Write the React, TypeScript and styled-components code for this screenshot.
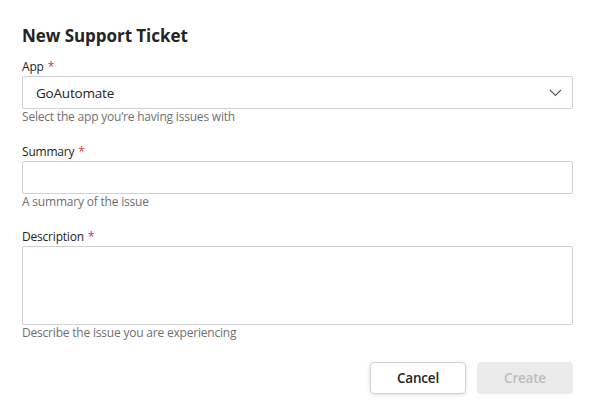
import React from 'react';
import styled, { createGlobalStyle } from 'styled-components';

const Global = createGlobalStyle`
  html, body {
    margin: 0;
    background: #ffffff;
  }
  body {
    font-family: "Open Sans", "Noto Sans", "Liberation Sans", sans-serif;
    color: #242424;
  }
`;

const Dialog = styled.form`
  width: 595px;
  height: 416px;
  box-sizing: border-box;
  padding: 22px 22px 0 22px;
  display: flex;
  flex-direction: column;
`;

const Title = styled.h1`
  margin: 0 0 9px 0;
  font-size: 17px;
  line-height: 28px;
  font-weight: 700;
  color: #242424;
  letter-spacing: -0.05px;
`;

const Field = styled.div`
  display: flex;
  flex-direction: column;
  margin-bottom: 19px;
`;

const Label = styled.label`
  font-size: 12px;
  line-height: 16px;
  color: #242424;
  margin-bottom: 1px;
  letter-spacing: -0.2px;
`;

const Star = styled.span`
  color: #d13438;
  margin-left: 4px;
`;

const Box = styled.div<{ $tall?: boolean }>`
  height: ${(p) => (p.$tall ? '79px' : '33px')};
  border: 1px solid #d1d1d1;
  border-radius: 2px;
  box-sizing: border-box;
  display: flex;
  align-items: center;
  justify-content: space-between;
  padding: 0 10px 0 13px;
  font-size: 13.5px;
  color: #242424;
  letter-spacing: -0.2px;
`;

const Hint = styled.div`
  font-size: 12px;
  line-height: 16px;
  color: #707070;
  letter-spacing: -0.2px;
`;

const Actions = styled.div`
  display: flex;
  justify-content: flex-end;
  gap: 11px;
  margin-top: 2px;
`;

const Button = styled.button<{ $disabled?: boolean }>`
  width: 96px;
  height: 32px;
  border-radius: 4px;
  font-family: inherit;
  font-size: 13.5px;
  font-weight: 600;
  letter-spacing: -0.2px;
  border: 1px solid ${(p) => (p.$disabled ? '#ebebeb' : '#d1d1d1')};
  background: ${(p) => (p.$disabled ? '#ebebeb' : '#ffffff')};
  color: ${(p) => (p.$disabled ? '#bdbdbd' : '#242424')};
  box-shadow: ${(p) => (p.$disabled ? 'none' : '0 1px 4px rgba(0,0,0,0.12)')};
`;

const Chevron = () => (
  <svg width="13" height="8" viewBox="0 0 13 8">
    <path d="M1 1 L6.5 6.5 L12 1" fill="none" stroke="#555555" strokeWidth="1.1" />
  </svg>
);

export default function App() {
  return (
    <>
      <Global />
      <Dialog>
        <Title>New Support Ticket</Title>
        <Field>
          <Label>
            App<Star>*</Star>
          </Label>
          <Box>
            <span>GoAutomate</span>
            <Chevron />
          </Box>
          <Hint>Select the app you’re having issues with</Hint>
        </Field>
        <Field>
          <Label>
            Summary<Star>*</Star>
          </Label>
          <Box />
          <Hint>A summary of the issue</Hint>
        </Field>
        <Field>
          <Label>
            Description<Star>*</Star>
          </Label>
          <Box $tall />
          <Hint>Describe the issue you are experiencing</Hint>
        </Field>
        <Actions>
          <Button type="button">Cancel</Button>
          <Button type="button" $disabled>
            Create
          </Button>
        </Actions>
      </Dialog>
    </>
  );
}
